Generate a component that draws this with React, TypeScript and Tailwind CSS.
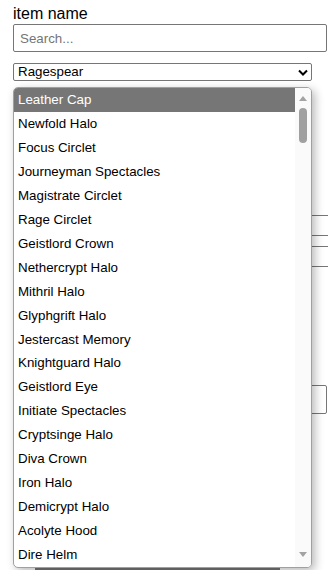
import React from "react";

const options = [
    "Leather Cap",
    "Newfold Halo",
    "Focus Circlet",
    "Journeyman Spectacles",
    "Magistrate Circlet",
    "Rage Circlet",
    "Geistlord Crown",
    "Nethercrypt Halo",
    "Mithril Halo",
    "Glyphgrift Halo",
    "Jestercast Memory",
    "Knightguard Halo",
    "Geistlord Eye",
    "Initiate Spectacles",
    "Cryptsinge Halo",
    "Diva Crown",
    "Iron Halo",
    "Demicrypt Halo",
    "Acolyte Hood",
    "Dire Helm",
];

export default function App() {
    return (
        <div
            className="relative w-[328px] h-[570px] overflow-hidden bg-white text-black"
            style={{ fontFamily: '"Liberation Sans", Arial, sans-serif' }}
        >
            {/* ── Form ── */}
            <div className="pl-[13px] pr-[1px] pt-[3px] flex flex-col">
                <label className="text-[16px] leading-[21px]">item name</label>
                <input
                    placeholder="Search..."
                    className="h-[28px] w-full border border-[#767676] rounded-[2px] px-[6px] text-[13.33px] placeholder:text-[#757575] outline-none"
                />
                <div className="mt-[11px] w-[299px] h-[18px] border border-[#767676] rounded-[2px] flex items-center justify-between pl-[4px] pr-[3px] text-[13.33px] leading-none">
                    <span>Ragespear</span>
                    <svg width="10" height="7" viewBox="0 0 10 7">
                        <path d="M1 1.5 L5 5.5 L9 1.5" fill="none" stroke="#000" strokeWidth="2" />
                    </svg>
                </div>

                {/* ── Content behind the open list ── */}
                <div className="mt-[134px] flex flex-col gap-[10px] -mr-[20px]">
                    <div className="h-[21px] border border-[#767676]" />
                    <div className="h-[21px] border border-[#767676]" />
                </div>
                <div className="mt-[118px] h-[29px] border border-[#767676] rounded-[2px]" />
                <div className="mt-[11px] w-[299px] h-[16px] border border-[#767676] rounded-[2px]" />
                <div className="mt-[127px] ml-[22px] w-[245px] h-[2px] bg-[#767676]" />
            </div>

            {/* ── Open select list ── */}
            <div className="absolute left-[13px] top-[87px] w-[299px] h-[481px] bg-white border border-[#a0a0a0] rounded-[5px] shadow-[3px_3px_10px_rgba(0,0,0,0.28)] overflow-hidden flex">
                <ul className="flex-1 flex flex-col text-[13.33px]">
                    {options.map((opt, i) => (
                        <li
                            key={opt}
                            className={`h-[24px] flex items-center pl-[4px] ${i === 0 ? "bg-[#767676] text-white" : "text-black"}`}
                        >
                            {opt}
                        </li>
                    ))}
                </ul>
                {/* scrollbar */}
                <div className="w-[16px] flex flex-col items-center bg-[#fafafa]">
                    <svg width="10" height="16" viewBox="0 0 10 16" className="mt-[2px]">
                        <path d="M1 11 L5 6 L9 11 Z" fill="#a3a3a3" />
                    </svg>
                    <div className="mt-[2px] w-[8px] h-[35px] rounded-full bg-[#a0a0a0]" />
                    <div className="flex-1" />
                    <svg width="10" height="16" viewBox="0 0 10 16" className="mb-[4px]">
                        <path d="M1 5 L5 10 L9 5 Z" fill="#a3a3a3" />
                    </svg>
                </div>
            </div>
        </div>
    );
}
